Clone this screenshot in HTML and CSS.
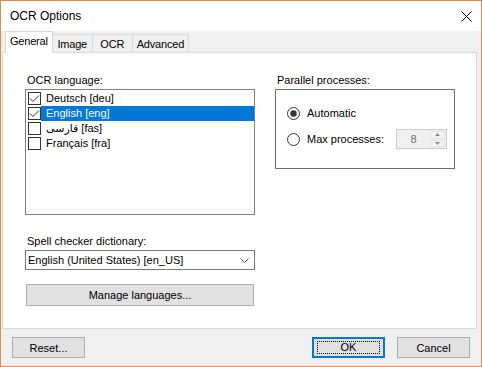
FILE: index.html
```html
<!DOCTYPE html>
<html lang="en">
<head>
    <meta charset="UTF-8">
    <title>OCR Options</title>
    <link rel="stylesheet" href="styles.css">
</head>
<body>
    <div class="window">
        <div class="titlebar">
            <span class="title">OCR Options</span>
            <svg class="close" width="11" height="11" viewBox="0 0 11 11">
                <path d="M0.5 0.5 L10.5 10.5 M10.5 0.5 L0.5 10.5" stroke="#000" stroke-width="1"/>
            </svg>
        </div>

        <div class="tabs">
            <div class="tab active">General</div>
            <div class="tab">Image</div>
            <div class="tab">OCR</div>
            <div class="tab">Advanced</div>
        </div>

        <div class="panel">
            <!-- left column -->
            <div class="col-left">
                <div class="label">OCR language:</div>
                <div class="listbox">
                    <div class="item">
                        <span class="check on"><svg width="11" height="11" viewBox="0 0 11 11"><path d="M1 5.5 L4 8.5 L10 2.5" stroke="#333" fill="none"/></svg></span>
                        <span class="item-text">Deutsch [deu]</span>
                    </div>
                    <div class="item">
                        <span class="check on"><svg width="11" height="11" viewBox="0 0 11 11"><path d="M1 5.5 L4 8.5 L10 2.5" stroke="#333" fill="none"/></svg></span>
                        <span class="item-text selected">English [eng]</span>
                    </div>
                    <div class="item">
                        <span class="check"></span>
                        <span class="item-text">فارسی [fas]</span>
                    </div>
                    <div class="item">
                        <span class="check"></span>
                        <span class="item-text">Français [fra]</span>
                    </div>
                </div>

                <div class="label spell">Spell checker dictionary:</div>
                <div class="combo">
                    <span>English (United States) [en_US]</span>
                    <svg width="9" height="5" viewBox="0 0 9 5"><path d="M0.5 0.5 L4.5 4.5 L8.5 0.5" stroke="#555" fill="none"/></svg>
                </div>

                <div class="button wide">Manage languages...</div>
            </div>

            <!-- right column -->
            <div class="col-right">
                <div class="label">Parallel processes:</div>
                <div class="group">
                    <div class="radio-row">
                        <svg class="radio" width="13" height="13" viewBox="0 0 13 13"><circle cx="6.5" cy="6.5" r="6" fill="#fff" stroke="#333"/><circle cx="6.5" cy="6.5" r="3.2" fill="#333"/></svg>
                        <span>Automatic</span>
                    </div>
                    <div class="radio-row">
                        <svg class="radio" width="13" height="13" viewBox="0 0 13 13"><circle cx="6.5" cy="6.5" r="6" fill="#fff" stroke="#333"/></svg>
                        <span>Max processes:</span>
                        <div class="spin">
                            <span class="spin-value">8</span>
                            <div class="spin-buttons">
                                <div class="spin-btn"><svg width="5" height="3" viewBox="0 0 5 3"><path d="M2.5 0 L5 3 L0 3 Z" fill="#8a8a8a"/></svg></div>
                                <div class="spin-btn"><svg width="5" height="3" viewBox="0 0 5 3"><path d="M0 0 L5 0 L2.5 3 Z" fill="#8a8a8a"/></svg></div>
                            </div>
                        </div>
                    </div>
                </div>
            </div>
        </div>

        <div class="footer">
            <div class="button">Reset...</div>
            <div class="button default push"><span class="focus">OK</span></div>
            <div class="button">Cancel</div>
        </div>
    </div>
</body>
</html>
```

FILE: styles.css
```css
/*Common*/
* {
    box-sizing: border-box;
}

body {
    margin: 0;
    font-family: "Liberation Sans", "DejaVu Sans", sans-serif;
    font-size: 11px;
    color: #000;
}

/*Dialog window*/
.window {
    width: 482px;
    height: 367px;
    display: flex;
    flex-direction: column;

    border: 1px solid #e38b4f;
    background-color: #f0f0f0;
}

.titlebar {
    flex: none;
    height: 30px;
    display: flex;
    align-items: center;
    justify-content: space-between;
    padding: 0 9px 0 9px;
    background-color: #fff;
}

.title {
    font-size: 12px;
}

/*Tabs*/
.tabs {
    flex: none;
    height: 21px;
    display: flex;
    align-items: flex-end;
    padding-left: 5px;
}

.tab {
    height: 18px;
    min-width: 41px;
    padding: 3px 4px 0;
    margin-left: -1px;

    border: 1px solid #d9d9d9;
    border-bottom: none;
    background-color: #f0f0f0;

    line-height: 13px;
    text-align: center;
    letter-spacing: -0.2px;
}

.tab.active {
    height: 22px;
    margin-bottom: -1px;
    padding-top: 3px;
    position: relative;
    z-index: 1;
    background-color: #fff;
}

/*Tab page*/
.panel {
    flex: none;
    height: 277px;
    margin: 0 4px 0 1px;
    padding: 21px 0 0 22px;
    display: flex;
    gap: 20px;

    border: 1px solid #d9d9d9;
    background-color: #fff;
}

.label {
    line-height: 13px;
    padding-left: 2px;
}

.col-left {
    width: 230px;
    display: flex;
    flex-direction: column;
}

.col-right {
    width: 180px;
}

/*Checked list*/
.listbox {
    height: 126px;
    margin-top: 2px;
    padding: 1px 0;
    border: 1px solid #828282;
}

.item {
    height: 15px;
    display: flex;
    align-items: center;
}

.check {
    width: 13px;
    height: 13px;
    margin-left: 2px;
    display: flex;
    align-items: center;
    justify-content: center;
    border: 1px solid #333;
    background-color: #fff;
}

.item-text {
    flex: 1;
    height: 15px;
    padding-left: 5px;
    line-height: 15px;
}

.item-text.selected {
    background-color: #0078d7;
    color: #fff;
}

.spell {
    margin-top: 20px;
}

/*Combo box*/
.combo {
    height: 20px;
    margin-top: 2px;
    padding: 0 5px 0 2px;
    display: flex;
    align-items: center;
    justify-content: space-between;

    border: 1px solid #7a7a7a;
    background-color: #fff;
}

/*Buttons*/
.button {
    width: 73px;
    height: 21px;
    display: flex;
    align-items: center;
    justify-content: center;

    border: 1px solid #adadad;
    background-color: #e1e1e1;
}

.button.wide {
    width: 228px;
    height: 22px;
    margin: 14px 0 0 1px;
}

.button.default {
    border-color: #0078d7;
    box-shadow: inset 0 0 0 1px #0078d7;
}

.focus {
    width: 63px;
    height: 13px;
    line-height: 11px;
    text-align: center;
    border: 1px dotted #000;
}

/*Parallel processes group*/
.group {
    height: 80px;
    margin-top: 2px;
    padding: 13px 7px 0 11px;
    display: flex;
    flex-direction: column;
    gap: 6px;
    border: 1px solid #6e6e6e;
}

.radio-row {
    height: 20px;
    display: flex;
    align-items: center;
}

.radio {
    margin-right: 7px;
}

/*Numeric up-down, disabled*/
.spin {
    width: 51px;
    height: 20px;
    margin-left: auto;
    display: flex;
    border: 1px solid #cccccc;
    background-color: #f0f0f0;
}

.spin-value {
    flex: 1;
    line-height: 18px;
    text-align: center;
    color: #6d6d6d;
}

.spin-buttons {
    width: 16px;
    padding: 1px 1px 1px 0;
    display: flex;
    flex-direction: column;
    gap: 1px;
}

.spin-btn {
    flex: 1;
    display: flex;
    align-items: center;
    justify-content: center;
    border: 1px solid #e3e3e3;
    background-color: #f4f4f4;
}

/*Bottom buttons*/
.footer {
    flex: 1;
    padding: 8px 11px 0;
    display: flex;
    gap: 12px;
}

.push {
    margin-left: auto;
}
```
